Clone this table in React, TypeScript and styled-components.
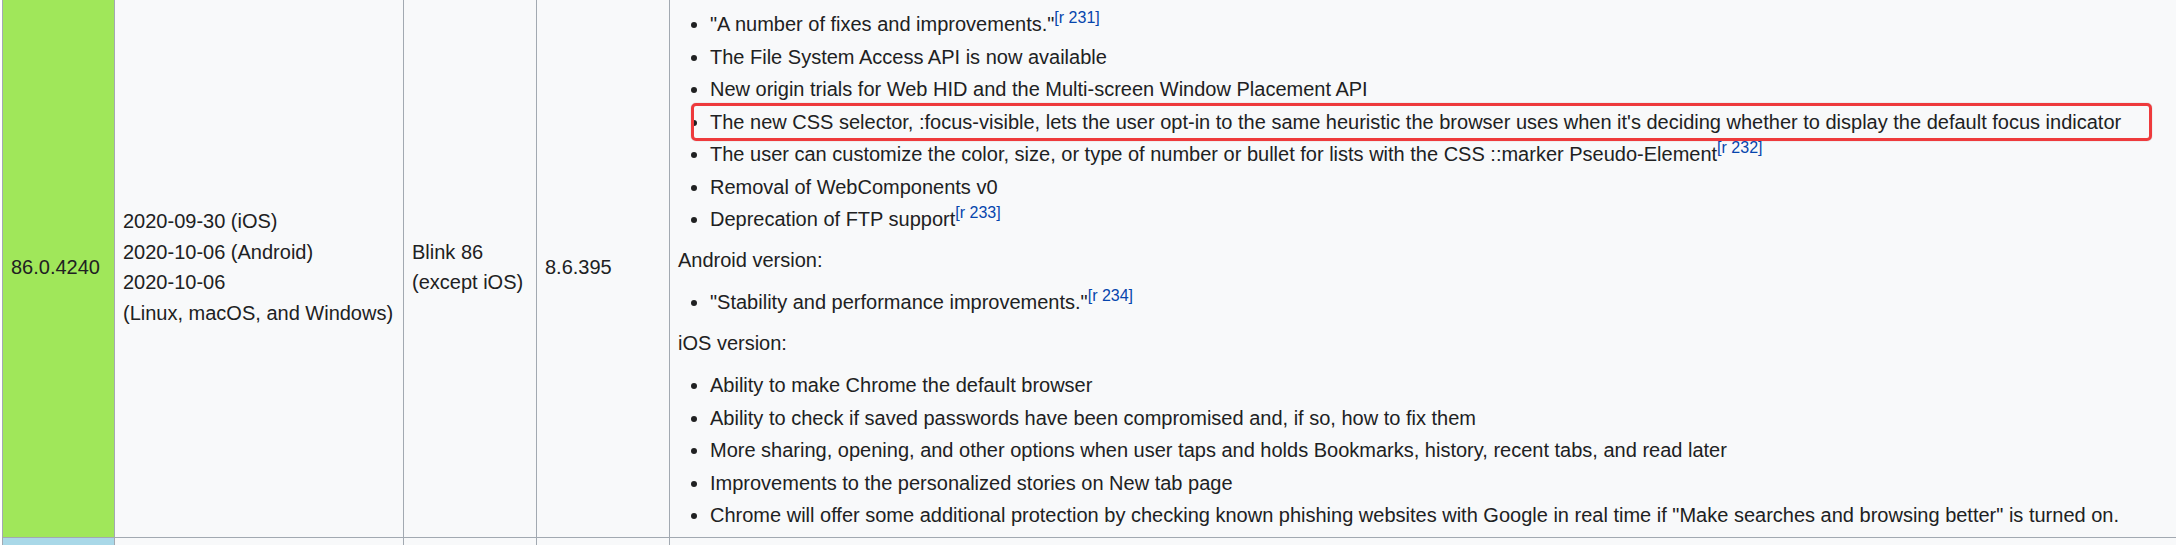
import React from "react";
import styled, { createGlobalStyle } from "styled-components";

const GlobalStyle = createGlobalStyle`
  body {
    margin: 0;
    overflow: hidden;
    background: #ffffff;
    font-family: "Liberation Sans", Arial, sans-serif;
    color: #202122;
  }
`;

const Table = styled.table`
  border-collapse: collapse;
  table-layout: fixed;
  width: 2300px;
  margin: -3px 0 0 2px;
  background: #f8f9fa;
  font-size: 20px;
  line-height: 30.5px;
`;

const Col = styled.col<{ $w: number }>`
  width: ${({ $w }) => $w}px;
`;

const Cell = styled.td<{ $bg?: string; $tall?: boolean }>`
  border: 1px solid #a2a9b1;
  padding: 4px 8px;
  vertical-align: middle;
  background: ${({ $bg }) => $bg || "transparent"};
  height: ${({ $tall }) => ($tall ? "200px" : "auto")};
`;

const List = styled.ul<{ $first?: boolean }>`
  margin: ${({ $first }) => ($first ? "7.25px" : "11.5px")} 0 0 32px;
  padding: 0;
  list-style: disc outside;
`;

const Item = styled.li`
  position: relative;
  margin-bottom: 2px;
`;

const Note = styled.p`
  margin: 10.5px 0 0;
`;

const Ref = styled.sup`
  font-size: 80%;
  line-height: 1;
  vertical-align: super;
  color: #0645ad;
  white-space: nowrap;
`;

// red annotation box drawn over the highlighted item
const Highlight = styled.span`
  position: absolute;
  left: -19px;
  top: -4px;
  width: 1461px;
  height: 38px;
  box-sizing: border-box;
  border: 3px solid #ee3a3c;
  border-radius: 5px;
  box-shadow: 0 0 1px rgba(60, 20, 20, 0.45);
  pointer-events: none;
`;

const desktopNotes: { text: string; ref?: string; marked?: boolean }[] = [
  { text: "\"A number of fixes and improvements.\"", ref: "231" },
  { text: "The File System Access API is now available" },
  { text: "New origin trials for Web HID and the Multi-screen Window Placement API" },
  {
    text: "The new CSS selector, :focus-visible, lets the user opt-in to the same heuristic the browser uses when it's deciding whether to display the default focus indicator",
    marked: true,
  },
  {
    text: "The user can customize the color, size, or type of number or bullet for lists with the CSS ::marker Pseudo-Element",
    ref: "232",
  },
  { text: "Removal of WebComponents v0" },
  { text: "Deprecation of FTP support", ref: "233" },
];

const iosNotes = [
  "Ability to make Chrome the default browser",
  "Ability to check if saved passwords have been compromised and, if so, how to fix them",
  "More sharing, opening, and other options when user taps and holds Bookmarks, history, recent tabs, and read later",
  "Improvements to the personalized stories on New tab page",
  "Chrome will offer some additional protection by checking known phishing websites with Google in real time if \"Make searches and browsing better\" is turned on.",
];

const App: React.FC = () => {
  return (
    <>
      <GlobalStyle />
      <Table>
        <colgroup>
          <Col $w={112} />
          <Col $w={289} />
          <Col $w={133} />
          <Col $w={133} />
          <Col $w={1633} />
        </colgroup>
        <tbody>
          <tr>
            <Cell $bg="#a0e75a">86.0.4240</Cell>
            <Cell>
              2020-09-30 (iOS)
              <br />
              2020-10-06 (Android)
              <br />
              2020-10-06
              <br />
              (Linux, macOS, and Windows)
            </Cell>
            <Cell>
              Blink 86
              <br />
              (except iOS)
            </Cell>
            <Cell>8.6.395</Cell>
            <Cell>
              <List $first>
                {desktopNotes.map((n) => (
                  <Item key={n.text}>
                    {n.text}
                    {n.ref && <Ref>[r {n.ref}]</Ref>}
                    {n.marked && <Highlight />}
                  </Item>
                ))}
              </List>
              <Note>Android version:</Note>
              <List>
                <Item>
                  "Stability and performance improvements."<Ref>[r 234]</Ref>
                </Item>
              </List>
              <Note>iOS version:</Note>
              <List>
                {iosNotes.map((t) => (
                  <Item key={t}>{t}</Item>
                ))}
              </List>
            </Cell>
          </tr>
          <tr>
            <Cell $bg="#a9d8e8" $tall />
            <Cell />
            <Cell />
            <Cell />
            <Cell />
          </tr>
        </tbody>
      </Table>
    </>
  );
};

export default App;
